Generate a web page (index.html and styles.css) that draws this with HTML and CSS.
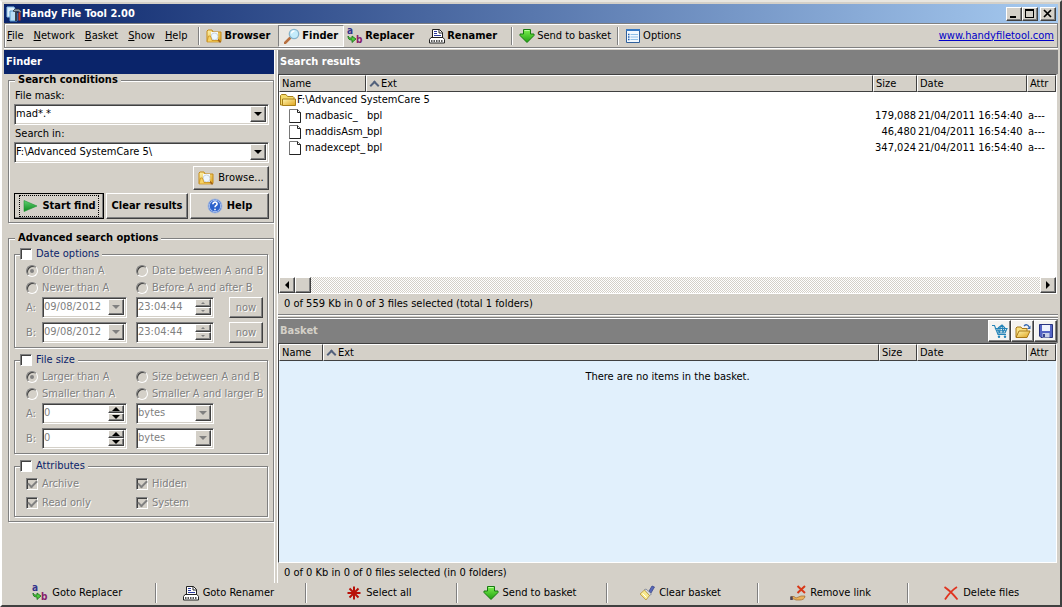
FILE: index.html
```html
<!DOCTYPE html>
<html lang="en">
<head>
<meta charset="utf-8">
<title>Handy File Tool 2.00</title>
<link rel="stylesheet" href="styles.css">
</head>
<body>
<svg class="sprite" aria-hidden="true">
  <defs>
    <linearGradient id="gold" x1="0" y1="0" x2="1" y2="1"><stop offset="0" stop-color="#fff6b0"/><stop offset="1" stop-color="#dfa31c"/></linearGradient>
    <linearGradient id="leaf" x1="0" y1="0" x2="0" y2="1"><stop offset="0" stop-color="#7df050"/><stop offset="1" stop-color="#1fa010"/></linearGradient>
    <linearGradient id="play" x1="0" y1="0" x2="0" y2="1"><stop offset="0" stop-color="#5fd070"/><stop offset="1" stop-color="#0c8a1c"/></linearGradient>
  </defs>
  <symbol id="i-app" viewBox="0 0 16 16">
    <path d="M1 1h7l1 2v8H1z" fill="#dceefa" stroke="#8cc0e8"/><path d="M4 5h5l2 2v8H4z" fill="#b8dcf4" stroke="#5c9cd0"/>
    <path d="M7 5l2-2h4l2.500 2.500-1 1.500-2-1.500H8z" fill="#8c98a4" stroke="#2c3440" stroke-width=".8"/><path d="M13.500 6.500v8" stroke="#c83820" stroke-width="2"/><path d="M10 6v9" stroke="#26323e" stroke-width="1.800"/>
  </symbol>
  <symbol id="i-browse" viewBox="0 0 16 16">
    <path d="M1 13.500V3l1-1h4l1 2h8v9.500z" fill="url(#gold)" stroke="#c48a18"/><path d="M5 4h7v8H5z" fill="#f4f9ff"/><circle cx="8.500" cy="8.500" r="3.500" fill="#eef7ff" stroke="#c0cad4" stroke-width=".8"/>
    <path d="M1 14l1.500-6h2l1.500 4.500h8l-1 1.500z" fill="#f7d264" stroke="#c48a18" stroke-width=".7"/><path d="M12 11.500l2.500 3" stroke="#a06018" stroke-width="1.500"/>
  </symbol>
  <symbol id="i-find" viewBox="0 0 16 16">
    <path d="M1 15l5-5" stroke="#b87040" stroke-width="2.500" stroke-linecap="round"/><circle cx="10" cy="6" r="4.700" fill="#c4ecfb" stroke="#86b4cc" stroke-width="1.300"/><path d="M7.500 5.500a3 3 0 013-2.500" stroke="#fff" stroke-width="1.300" fill="none"/>
  </symbol>
  <symbol id="i-rename" viewBox="0 0 16 16">
    <path d="M3.500 10V1.500h7l3 3V10" fill="#fff" stroke="#222"/><path d="M10 1.500v3.500h3.500" stroke="#222" fill="none"/><path d="M5 3.500h3M5 5.500h3M5 7.500h7" stroke="#2c3ca0" fill="none"/>
    <path d="M2 9.500h12l1.500 2v3.500H.5v-3.500z" fill="#fff" stroke="#222"/><path d="M2 13h12" stroke="#222" stroke-width="1.500" stroke-dasharray="1.500 1"/>
  </symbol>
  <symbol id="i-down" viewBox="0 0 16 16"><path d="M4.500 1.500h7V6h3.500v1.500L8 14.500 1 7.500V6h3.500z" fill="url(#leaf)" stroke="#167a10"/><path d="M5.500 2.500h5" stroke="#b8ffa0"/></symbol>
  <symbol id="i-options" viewBox="0 0 16 16">
    <path d="M1.500 2h13v12.500h-13z" fill="#f2f9ff" stroke="#30609c"/><path d="M1 1h14v2H1z" fill="#3478c4"/><path d="M5.500 6.500H13M5.500 9H13M5.500 11.500H13" stroke="#90c0e8"/><path d="M3 6.500h1.500M3 9h1.500M3 11.500h1.500" stroke="#2060b0" stroke-width="1.300"/>
  </symbol>
  <symbol id="i-play" viewBox="0 0 16 16"><path d="M2 2.500L15 8 2 13.500z" fill="url(#play)" stroke="#1e9434" stroke-width=".6"/></symbol>
  <symbol id="i-help" viewBox="0 0 16 16">
    <circle cx="8" cy="8" r="7" fill="#2c62cc" stroke="#a8bce0"/><circle cx="8" cy="8" r="5.700" fill="none" stroke="#dce8ff" stroke-width=".7"/><path d="M5.800 6.300C6 3 10.600 3.600 10 6.300 9.800 7.500 8 7.500 8 9.300M8 10.800v1.500" stroke="#fff" stroke-width="1.600" fill="none"/>
  </symbol>
  <symbol id="i-folder" viewBox="0 0 16 16"><path d="M.5 13V3.500l1-1h4.500L7.500 4.500H13l1 1V13z" fill="#f6dc6c" stroke="#a88018"/><path d="M2.500 13.500V7h13v6.500z" fill="url(#gold)" stroke="#a88018"/></symbol>
  <symbol id="i-file" viewBox="0 0 16 16"><path d="M2.500 1.500h8l3 3v10h-11z" fill="#fff" stroke="#777"/><path d="M10.500 1.500v3h3v10h-11" fill="none" stroke="#222"/></symbol>
  <symbol id="i-star" viewBox="0 0 16 16"><path d="M8 1.500v13M1.500 8h13M3.500 3.500l9 9M12.500 3.500l-9 9" stroke="#b81008" stroke-width="2"/></symbol>
  <symbol id="i-brush" viewBox="0 0 16 16"><path d="M10 6l3-5 2.500 1L12 8z" fill="#5868b8" stroke="#344088" stroke-width=".7"/><path d="M7 4l5.500 5-2 1.500L5 5z" fill="#d8dce8" stroke="#6c7488" stroke-width=".7"/><path d="M5.500 5l5 5.500L7 15 1 9z" fill="#f7e88c" stroke="#b08c30" stroke-width=".7"/><path d="M3.500 8.500l4 4" stroke="#fff"/></symbol>
  <symbol id="i-unlink" viewBox="0 0 16 16"><path d="M7.500 1l7.500 7M15 1L7.500 8" stroke="#d83818" stroke-width="2"/><path d="M1 11.500h3l2 1.500 5-2h4c0 3-3 4-5 4H6l-2-1H1z" fill="#eab25c" stroke="#a0682c" stroke-width=".7"/><path d="M1.500 11.500V15" stroke="#4c4458" stroke-width="2.500"/></symbol>
  <symbol id="i-delete" viewBox="0 0 16 16"><path d="M1.500 2C6 5 11 10 14.500 14.500M14 2C9 5 5 10 2 14.500" stroke="#e03420" stroke-width="1.800" fill="none"/></symbol>
  <symbol id="i-cart" viewBox="0 0 16 16"><path d="M0 2.500h2.500L6 11.500h8M3.500 5.500H15l-2 4.500H5.500zM5.500 5.500L7.500 10M8.500 2.500l-1 7.500M10 2.500l1 7.500M13 5.500L10.500 10M4 7.700h10M6 5l4-3 3 3" stroke="#2484b8" stroke-width="1.100" fill="none"/><circle cx="7" cy="13.700" r="1.200" fill="#2484b8"/><circle cx="13" cy="13.700" r="1.200" fill="#2484b8"/></symbol>
  <symbol id="i-open" viewBox="0 0 16 16"><path d="M1 14V5l1-1h4l1 1.500h5V8" fill="#f8e080" stroke="#a87818"/><path d="M1 14.500L4 8h11l-3 6.500z" fill="url(#gold)" stroke="#a87818"/><path d="M9 3c2-2 4-1.500 5 1" stroke="#3468b0" stroke-width="1.300" fill="none"/><path d="M15.500 2.500v3.500H12z" fill="#3468b0"/></symbol>
  <symbol id="i-save" viewBox="0 0 16 16"><path d="M1.500 1.500h13v13H3l-1.500-1.500z" fill="#5464c4" stroke="#283480"/><path d="M4 2h8v6H4z" fill="#eef2fc"/><path d="M4.500 10h7v4.500h-7z" fill="#c8d0e8"/><path d="M6 11v3" stroke="#283480" stroke-width="1.800"/></symbol>
</svg>

<div class="window">
  <header class="titlebar">
    <svg class="icon"><use href="#i-app"/></svg>
    <h1 class="title">Handy File Tool 2.00</h1>
    <button class="sysbtn" aria-label="Minimize"><svg viewBox="0 0 10 9"><path d="M1 7h6v2H1z"/></svg></button>
    <button class="sysbtn" aria-label="Maximize"><svg viewBox="0 0 10 9"><path d="M0 0h9v9H0zM1 2v6h7V2z" fill-rule="evenodd"/></svg></button>
    <button class="sysbtn sysclose" aria-label="Close"><svg viewBox="0 0 10 9"><path d="M1 1l7 7M8 1L1 8" stroke="#000" stroke-width="1.700"/></svg></button>
  </header>

  <nav class="toolbar">
    <button class="menu"><u>F</u>ile</button>
    <button class="menu"><u>N</u>etwork</button>
    <button class="menu"><u>B</u>asket</button>
    <button class="menu"><u>S</u>how</button>
    <button class="menu"><u>H</u>elp</button>
    <span class="sep"></span>
    <button class="tool strong"><svg class="icon"><use href="#i-browse"/></svg>Browser</button>
    <button class="tool strong active"><svg class="icon"><use href="#i-find"/></svg>Finder</button>
    <button class="tool strong"><svg class="icon letters" viewBox="0 0 16 16" aria-hidden="true"><text class="glyph-a" x="0" y="6">a</text><text class="glyph-b" x="9" y="15">b</text><path d="M1 8c0 3 1 4 4 4v2.500l4-3.500-4-3v2C3 10 2 10 1 8z" fill="#4cc83c" stroke="#167018" stroke-width=".8"/></svg>Replacer</button>
    <button class="tool strong wide"><svg class="icon"><use href="#i-rename"/></svg>Renamer</button>
    <span class="sep"></span>
    <button class="tool"><svg class="icon"><use href="#i-down"/></svg>Send to basket</button>
    <span class="sep"></span>
    <button class="tool"><svg class="icon"><use href="#i-options"/></svg>Options</button>
    <a class="site" href="#">www.handyfiletool.com</a>
  </nav>

  <main class="main">
    <section class="finder">
      <h2 class="caption navy">Finder</h2>
      <fieldset class="group">
        <legend>Search conditions</legend>
        <label class="field-label" for="mask">File mask:</label>
        <div class="box"><input id="mask" value="mad*.*"><button class="drop" aria-label="Show masks"></button></div>
        <label class="field-label" for="where">Search in:</label>
        <div class="box"><input id="where" value="F:\Advanced SystemCare 5\"><button class="drop" aria-label="Show folders"></button></div>
        <button class="btn browse"><svg class="icon"><use href="#i-browse"/></svg>Browse...</button>
        <div class="actions">
          <button class="btn strong default"><span class="focus"><svg class="icon"><use href="#i-play"/></svg>Start find</span></button>
          <button class="btn strong">Clear results</button>
          <button class="btn strong"><svg class="icon"><use href="#i-help"/></svg>Help</button>
        </div>
      </fieldset>

      <fieldset class="group advanced">
        <legend>Advanced search options</legend>
        <fieldset class="sub">
          <legend><label><input type="checkbox">Date options</label></legend>
          <div class="choices">
            <label><input type="radio" name="date" checked disabled>Older than A</label>
            <label><input type="radio" name="date" disabled>Date between A and B</label>
            <label><input type="radio" name="date" disabled>Newer than A</label>
            <label><input type="radio" name="date" disabled>Before A and after B</label>
          </div>
          <div class="range">
            <label for="da">A:</label>
            <div class="box"><input id="da" value="09/08/2012" disabled><button class="drop" disabled aria-label="Calendar A"></button></div>
            <div class="box second"><input value="23:04:44" aria-label="Time A" disabled><span class="spin"><button disabled aria-label="Later"></button><button disabled aria-label="Earlier"></button></span></div>
            <button class="btn now" disabled>now</button>
            <label for="db">B:</label>
            <div class="box"><input id="db" value="09/08/2012" disabled><button class="drop" disabled aria-label="Calendar B"></button></div>
            <div class="box second"><input value="23:04:44" aria-label="Time B" disabled><span class="spin"><button disabled aria-label="Later"></button><button disabled aria-label="Earlier"></button></span></div>
            <button class="btn now" disabled>now</button>
          </div>
        </fieldset>
        <fieldset class="sub">
          <legend><label><input type="checkbox">File size</label></legend>
          <div class="choices">
            <label><input type="radio" name="size" checked disabled>Larger than A</label>
            <label><input type="radio" name="size" disabled>Size between A and B</label>
            <label><input type="radio" name="size" disabled>Smaller than A</label>
            <label><input type="radio" name="size" disabled>Smaller A and larger B</label>
          </div>
          <div class="range">
            <label for="sa">A:</label>
            <div class="box"><input id="sa" value="0" disabled><span class="spin big"><button aria-label="Increase A"></button><button aria-label="Decrease A"></button></span></div>
            <div class="box unit"><select aria-label="Unit A" disabled><option>bytes</option></select><span class="drop off"></span></div>
            <label for="sb">B:</label>
            <div class="box"><input id="sb" value="0" disabled><span class="spin big"><button aria-label="Increase B"></button><button aria-label="Decrease B"></button></span></div>
            <div class="box unit"><select aria-label="Unit B" disabled><option>bytes</option></select><span class="drop off"></span></div>
          </div>
        </fieldset>
        <fieldset class="sub">
          <legend><label><input type="checkbox">Attributes</label></legend>
          <div class="choices ticks">
            <label><input type="checkbox" checked disabled>Archive</label>
            <label><input type="checkbox" checked disabled>Hidden</label>
            <label><input type="checkbox" checked disabled>Read only</label>
            <label><input type="checkbox" checked disabled>System</label>
          </div>
        </fieldset>
      </fieldset>
    </section>

    <div class="lists">
      <section class="pane">
        <h2 class="caption">Search results</h2>
        <div class="list">
          <table>
            <colgroup><col class="c-name"><col><col class="c-size"><col class="c-date"><col class="c-attr"></colgroup>
            <thead><tr><th>Name</th><th class="sorted">Ext</th><th>Size</th><th>Date</th><th>Attr</th></tr></thead>
            <tbody>
              <tr><td class="folder" colspan="5"><svg class="icon"><use href="#i-folder"/></svg>F:\Advanced SystemCare 5</td></tr>
              <tr><td class="file"><svg class="icon"><use href="#i-file"/></svg>madbasic_</td><td>bpl</td><td class="num">179,088</td><td>21/04/2011 16:54:40</td><td>a---</td></tr>
              <tr><td class="file"><svg class="icon"><use href="#i-file"/></svg>maddisAsm_</td><td>bpl</td><td class="num">46,480</td><td>21/04/2011 16:54:40</td><td>a---</td></tr>
              <tr><td class="file"><svg class="icon"><use href="#i-file"/></svg>madexcept_</td><td>bpl</td><td class="num">347,024</td><td>21/04/2011 16:54:40</td><td>a---</td></tr>
            </tbody>
          </table>
          <div class="scroll">
            <button class="arrow left" aria-label="Scroll left"></button>
            <span class="thumb"></span>
            <button class="arrow right" aria-label="Scroll right"></button>
          </div>
        </div>
        <p class="status">0 of 559 Kb in 0 of 3 files selected (total 1 folders)</p>
      </section>
      <div class="splitter"></div>
      <section class="pane">
        <div class="caption dim">
          <h2>Basket</h2>
          <button class="mini" aria-label="Basket"><svg class="icon"><use href="#i-cart"/></svg></button>
          <button class="mini" aria-label="Open"><svg class="icon"><use href="#i-open"/></svg></button>
          <button class="mini" aria-label="Save"><svg class="icon"><use href="#i-save"/></svg></button>
        </div>
        <div class="list blue">
          <table>
            <colgroup><col class="c-short"><col><col class="c-size2"><col class="c-date"><col class="c-attr"></colgroup>
            <thead><tr><th>Name</th><th class="sorted">Ext</th><th>Size</th><th>Date</th><th>Attr</th></tr></thead>
          </table>
          <p class="empty">There are no items in the basket.</p>
        </div>
        <p class="status">0 of 0 Kb in 0 of 0 files selected (in 0 folders)</p>
      </section>
    </div>
  </main>

  <footer class="bottom">
    <button><svg class="icon letters" viewBox="0 0 16 16" aria-hidden="true"><text class="glyph-a" x="0" y="6">a</text><text class="glyph-b" x="9" y="15">b</text><path d="M1 8c0 3 1 4 4 4v2.500l4-3.500-4-3v2C3 10 2 10 1 8z" fill="#4cc83c" stroke="#167018" stroke-width=".8"/></svg>Goto Replacer</button>
    <button><svg class="icon"><use href="#i-rename"/></svg>Goto Renamer</button>
    <button><svg class="icon"><use href="#i-star"/></svg>Select all</button>
    <button><svg class="icon"><use href="#i-down"/></svg>Send to basket</button>
    <button><svg class="icon"><use href="#i-brush"/></svg>Clear basket</button>
    <button><svg class="icon"><use href="#i-unlink"/></svg>Remove link</button>
    <button><svg class="icon"><use href="#i-delete"/></svg>Delete files</button>
  </footer>
</div>
</body>
</html>
```
FILE: styles.css
```css
:root {
  --face: #d4d0c8;
  --shade: #808080;
  --dark: #404040;
  --navy: #0a246a;
}
* { box-sizing: border-box; }
body {
  margin: 0;
  background: var(--face);
  color: #000;
  font: 11px/14px "DejaVu Sans Condensed", "DejaVu Sans", sans-serif;
}
button, input, select { font: inherit; color: inherit; margin: 0; padding: 0; border: 0; background: none; }
h1, h2, p { margin: 0; font-size: 11px; }
.sprite { position: absolute; width: 0; height: 0; }
.icon { width: 16px; height: 16px; flex: none; }
.letters { overflow: visible; }
.glyph-a, .glyph-b { font-size: 10px; font-weight: bold; fill: #33338c; }
.glyph-b { fill: #86206c; }
.strong { font-weight: bold; }

.window {
  display: flex;
  flex-direction: column;
  min-height: 100vh;
  padding: 2px;
  border: 2px solid;
  border-color: #e8e6e0 var(--dark) var(--dark) #fff;
}

.titlebar {
  display: flex;
  align-items: center;
  height: 19px;
  padding: 0 2px;
  background: linear-gradient(90deg, #0a246a, #a6caf0);
  color: #fff;
}
.title { flex: 1; }
.sysbtn, .btn, .drop, .spin button, .arrow, .thumb, .mini {
  background: var(--face);
  border: 1px solid;
  border-color: #fff var(--dark) var(--dark) #fff;
  box-shadow: inset -1px -1px var(--shade);
}
.sysbtn { display: flex; align-items: center; justify-content: center; width: 16px; height: 14px; }
.sysbtn svg { width: 10px; height: 9px; }
.sysclose { margin-left: 2px; }

.toolbar {
  display: flex;
  align-items: center;
  height: 25px;
  padding-right: 3px;
  border: 1px solid var(--shade);
  box-shadow: inset 1px 1px #fff, 0 1px #fff;
}
.menu { margin-left: 2px; margin-right: 8px; }
.sep { width: 2px; height: 18px; margin: 0 3px; border-left: 1px solid var(--shade); border-right: 1px solid #fff; }
.tool { display: flex; align-items: center; gap: 2px; height: 22px; padding: 0 3px; }
.tool.wide { margin-left: 9px; margin-right: 8px; }
.tool.active {
  margin-left: 5px;
  padding: 0 5px;
  border: 1px solid;
  border-color: var(--shade) #fff #fff var(--shade);
  background: #eae8e3;
}
.site { margin-left: auto; color: #0000c8; }

.main { display: flex; flex: 1; gap: 2px; padding-top: 2px; }

.caption {
  display: flex;
  align-items: center;
  height: 24px;
  padding: 0 2px;
  background: var(--shade);
  color: #fff;
}
.caption h2 { flex: 1; }
.caption.navy { background: var(--navy); }
.caption.dim { color: var(--face); padding-right: 1px; }
.mini { display: flex; align-items: center; justify-content: center; width: 23px; height: 22px; background: #f4f3f0; }

.finder { width: 271px; flex: none; border-right: 1px solid #fff; }
fieldset { min-width: 0; margin: 0; border: 1px solid var(--shade); box-shadow: 1px 1px #fff, inset 1px 1px #fff; }
legend { height: 12px; line-height: 12px; padding: 0 3px; background: var(--face); }
.group { margin-left: 4px; padding: 1px 4px 3px 5px; }
.group > legend { margin-left: 1px; font-weight: bold; }
.advanced { margin-top: 9px; padding: 4px 5px 4px 5px; }
.field-label { display: block; padding-left: 1px; line-height: 17px; }

.box {
  display: flex;
  height: 21px;
  background: #fff;
  border: 1px solid;
  border-color: var(--shade) #fff #fff var(--shade);
  box-shadow: inset 1px 1px var(--dark), inset -1px -1px var(--face);
  padding: 1px 2px 2px 1px;
}
.box input, .box select { flex: 1; width: 0; min-width: 0; appearance: none; }
.box :disabled { color: var(--shade); opacity: 1; }
.drop { display: grid; place-items: center; width: 16px; flex: none; }
.drop::after { content: ""; border: 4px solid transparent; border-top-color: #000; border-bottom: 0; }
.drop:disabled::after, .drop.off::after { border-top-color: var(--shade); }
.spin { display: grid; grid-template-rows: 1fr 1fr; width: 16px; flex: none; }
.spin button { display: grid; place-items: center; min-height: 0; }
.spin button::after { content: ""; border: 2px solid transparent; border-bottom-color: var(--shade); border-top: 0; }
.spin button:last-child::after { border-top: 2px solid var(--shade); border-bottom: 0; }
.spin.big button::after { border-width: 0 4px 4px; border-bottom-color: #000; }
.spin.big button:last-child::after { border-width: 4px 4px 0; border-top-color: #000; }

.btn { display: flex; align-items: center; justify-content: center; gap: 4px; height: 26px; white-space: nowrap; }
.btn:disabled { color: var(--shade); text-shadow: 1px 1px #fff; }
.browse { width: 76px; height: 24px; margin: 3px 0 3px auto; }
.actions { display: grid; grid-template-columns: 90fr 82fr 79fr; gap: 2px; }
.default { outline: 1px solid #000; outline-offset: -1px; }
.focus { display: flex; align-items: center; gap: 4px; height: 20px; padding: 0 2px; outline: 1px dotted #000; }

.sub { padding: 2px 4px 4px 11px; }
.sub + .sub { margin-top: 6px; }
.sub > legend { margin-left: -6px; padding: 0 3px 0 0; color: var(--navy); }
.sub label { display: flex; align-items: center; gap: 4px; white-space: nowrap; }
.choices { display: grid; grid-template-columns: 110px 1fr; grid-auto-rows: 17px; color: var(--shade); text-shadow: 1px 1px #fff; margin-bottom: 1px; }
.ticks { grid-auto-rows: 19px; margin: 0; }
input[type="checkbox"], input[type="radio"] {
  appearance: none;
  display: grid;
  place-items: center;
  width: 12px;
  height: 12px;
  background: #fff;
  border: 1px solid;
  border-color: var(--shade) #fff #fff var(--shade);
  box-shadow: inset 1px 1px var(--dark);
}
input[type="radio"] { border-radius: 50%; }
input:disabled[type="checkbox"], input:disabled[type="radio"] { background: var(--face); }
input[type="radio"]:checked::after { content: ""; width: 4px; height: 4px; border-radius: 50%; background: var(--shade); }
.ticks input::after { content: ""; width: 7px; height: 4px; border: solid var(--shade); border-width: 0 0 2px 2px; rotate: -45deg; translate: 0 -1px; }
.range { display: grid; grid-template-columns: 16px 85px 87px 1fr; gap: 4px 0; }
.range label { color: var(--shade); text-shadow: 1px 1px #fff; }
.range .second { margin-left: 9px; }
.range .unit { grid-column: 3 / 5; width: 78px; margin-left: 9px; }
.range .now { width: 34px; height: 21px; margin-left: auto; }

.lists { display: flex; flex: 1; flex-direction: column; min-width: 0; border-left: 1px solid #fff; }
.pane { display: flex; flex: 1; flex-direction: column; }
.list {
  display: flex;
  flex: 1;
  flex-direction: column;
  margin-right: 1px;
  background: #fff;
  border: 1px solid;
  border-color: var(--dark) #fff #fff var(--dark);
}
.blue { background: #e1f0fc; }
table { width: 100%; table-layout: fixed; border-collapse: separate; border-spacing: 0; }
.c-name { width: 87px; }
.c-short { width: 44px; }
.c-size { width: 44px; }
.c-size2 { width: 38px; }
.c-date { width: 110px; }
.c-attr { width: 29px; }
th {
  height: 17px;
  padding: 0 2px;
  font-weight: normal;
  text-align: left;
  background: var(--face);
  border: 1px solid;
  border-color: #fff var(--dark) var(--dark) #fff;
}
.sorted::before { content: ""; display: inline-block; width: 5px; height: 5px; margin: 0 3px 0 2px; border: solid #52617c; border-width: 2px 0 0 2px; rotate: 45deg; translate: 0 2px; }
td { height: 16px; padding: 0 1px; white-space: nowrap; line-height: 16px; }
td .icon { vertical-align: top; }
td.file { padding-left: 8px; }
td.file .icon { margin-right: 2px; }
td.folder { padding-left: 1px; }
td.folder .icon { margin-right: 1px; }
td.num { text-align: right; }
.scroll {
  display: flex;
  height: 16px;
  margin-top: auto;
  background: repeating-conic-gradient(#fff 0 25%, #d4d0c8 0 50%) 0 0 / 2px 2px;
}
.arrow { display: grid; place-items: center; width: 16px; }
.arrow::after { content: ""; border: 4px solid transparent; border-left: 0; border-right-color: #000; }
.arrow.right { margin-left: auto; }
.arrow.right::after { border: 4px solid transparent; border-right: 0; border-left-color: #000; }
.thumb { width: 16px; }
.status { height: 20px; padding: 0 6px; line-height: 20px; }
.splitter { height: 4px; margin-bottom: 1px; border: solid var(--shade); border-width: 1px 0; box-shadow: inset 0 1px #fff, 0 1px #fff; }
.empty { padding: 9px; text-align: center; }

.bottom { display: grid; grid-template-columns: repeat(7, 1fr); height: 20px; }
.bottom button { display: flex; align-items: center; justify-content: center; gap: 4px; padding-right: 4px; }
.bottom button + button { border-left: 1px solid var(--shade); box-shadow: inset 1px 0 #fff; }
```
